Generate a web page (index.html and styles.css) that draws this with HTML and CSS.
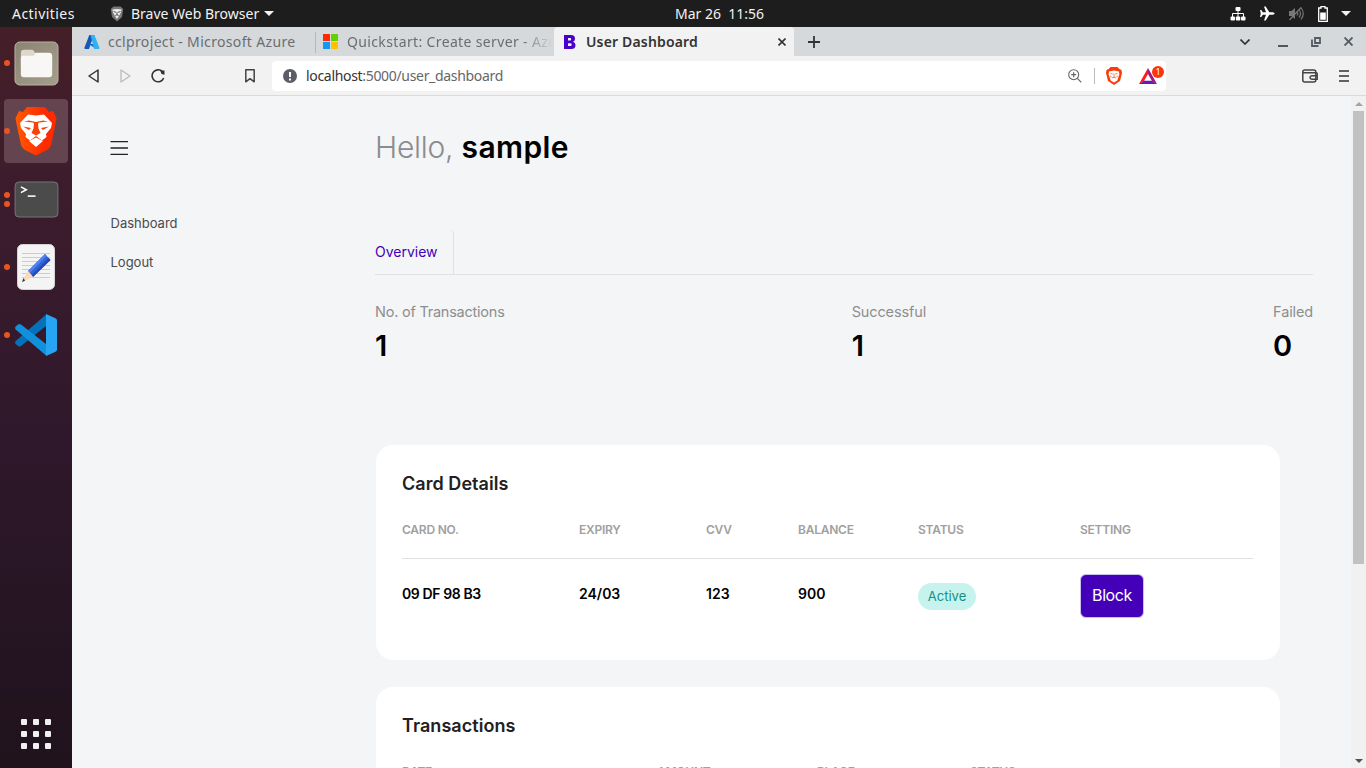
FILE: index.html
```html
<!DOCTYPE html>
<html lang="en">
<head>
<meta charset="utf-8">
<title>User Dashboard</title>
<link rel="stylesheet" href="styles.css">
</head>
<body>
<header class="topbar">
  <span class="activities">Activities</span>
  <div class="appmenu">
    <svg width="14" height="16" viewBox="0 0 14 16"><path d="M3.500.5h7L13.200 3 12 11 7 15.500 2 11 .8 3z" fill="#777"/><path d="M2.500 3.500 7 3l4.500.5-.6 3-2 3.500L7 13l-2-3-2-3.500z" fill="#eee"/><path d="M3.500 5.500l2.500.8M10.500 5.500 8 6.300M7 6v3M5.300 9.500 7 8.800l1.700.7" stroke="#555" fill="none"/></svg>
    <span class="appname">Brave Web Browser</span>
    <i class="caret"></i>
  </div>
  <span class="clock">Mar 26&nbsp; 11:56</span>
  <div class="tray">
    <svg width="16" height="14" viewBox="0 0 16 14" fill="#fff"><rect x="5.500" y="0" width="5" height="4" rx="1"/><rect x="0.500" y="9.500" width="4.500" height="4" rx="1"/><rect x="5.800" y="9.500" width="4.500" height="4" rx="1"/><rect x="11" y="9.500" width="4.500" height="4" rx="1"/><path d="M8 3v7M2.500 10V6.500h11V10" fill="none" stroke="#fff"/></svg>
    <svg width="15" height="15" viewBox="0 0 15 15" fill="#fff"><path d="M0 4h1.300l1.500 2.300H6L4 .5h1.700L9.300 6.300h3.200q2.200.3 2.200 1.200t-2.200 1.200H9.300L5.700 14.500H4l2-5.800H2.800L1.300 11H0l.8-3.500z"/></svg>
    <svg width="16" height="15" viewBox="0 0 16 15" fill="#777"><path d="M1 5h2.500L7 2v11l-3.500-3H1z"/><path d="M9 5.500q1.500 2 0 4M11 3.500q3 4 0 8M13 1.500q4.500 6 0 12M1.500 14 13 1.500" fill="none" stroke="#777" stroke-width="1.200"/></svg>
    <svg width="10" height="16" viewBox="0 0 10 16"><path d="M3 .7h4V2h2.300v13.300H.7V2H3z" fill="none" stroke="#fff" stroke-width="1.300"/><path d="M2.200 6.500h5.600v7.300H2.200z" fill="#fff"/></svg>
    <i class="caret"></i>
  </div>
</header>
<div class="desktop">
  <nav class="dock">
    <div class="launcher"><i class="dots"><b></b></i>
      <svg width="45" height="45" viewBox="0 0 46 46"><defs><linearGradient id="fg" x2="1" y2="1"><stop stop-color="#8b8474"/><stop offset="1" stop-color="#a59e8b"/></linearGradient></defs><rect x="1" y="1" width="44" height="44" rx="5" fill="url(#fg)" stroke="#b9b3a3"/><path d="M7 12q0-3 3-3h8q1.500 0 2.500 1.500L22 13h14q3 0 3 3v10H7z" fill="#dcd7c8"/><path d="M7 17q0-2 2-2h11l2-3h14q3 0 3 3v19q0 3-3 3H10q-3 0-3-3z" fill="#f8f7f5"/></svg></div>
    <div class="launcher active"><i class="dots"><b></b></i>
      <svg width="42" height="50" viewBox="0 0 42 50"><defs><linearGradient id="bg"><stop stop-color="#ff5a00"/><stop offset=".7" stop-color="#ff2a00"/></linearGradient></defs><path d="M12 1h18l4 5 4-1 3.500 7-1 6L36 39q-1 3-4 5L21 49.500 10 44q-3-2-4-5L1.500 18l-1-6L4 5l4 1z" fill="url(#bg)"/><path d="M13 8.500l8 1 8-1 8 8.500-1 5-5 6 .5 3-4.500 3.500-6-4.500-6 4.500-4.500-3.500.5-3-5-6-1-5z" fill="#fff"/><path d="M9 15.500l9 1 1 1-.5 5L16.500 27l4.500 2.500 4.500-2.500-2-4.500-.5-5 1-1 9-1-5-1-7 1.500-7-1.500zM8 20.500l8 1.500-2 2zM34 20.500 26 22l2 2z" fill="#f84208"/><path d="M21 31.500l7 3.500-7 6-7-6z" fill="#fff"/></svg></div>
    <div class="launcher"><i class="dots"><b></b><b></b></i>
      <svg width="45" height="37" viewBox="0 0 46 38"><rect x="1" y="1" width="44" height="36" rx="4" fill="#4b4b4b" stroke="#777"/><path d="M7 6l5.500 3L7 12" fill="none" stroke="#fff" stroke-width="1.600"/><path d="M14 15.500h8" stroke="#fff" stroke-width="1.600"/></svg></div>
    <div class="launcher"><i class="dots"><b></b></i>
      <svg width="38" height="46" viewBox="0 0 38 46"><rect x=".5" y=".5" width="37" height="45" rx="5" fill="#f4f4f4" stroke="#d4d4d4"/><path d="M5 9.500h28M5 13.500h28M5 17.500h28M5 21.500h28M5 25.500h28M5 29.500h28M5 33.500h28" stroke="#ccc"/><path d="M11 27 28 10l5.500 6L16 33z" fill="#2f63dc"/><path d="M11 27 28 10l1.800 2L12.800 29z" fill="#5580e8"/><path d="M14.500 31.500 31.700 14l1.800 2L16 33z" fill="#2149b8"/><path d="M11 27l5 6-11 5z" fill="#fbd9b9"/><path d="M6.500 34 8 36.800 5 38z" fill="#333"/></svg></div>
    <div class="launcher"><i class="dots"><b></b></i>
      <svg width="42" height="42" viewBox="0 0 42 42"><path d="M31 .5 31 12 6 32q-1.500 1-3 0L.7 30q-1.400-1.500 0-3z" fill="#0471b8"/><path d="M31 41.500V30L6 10.500q-1.500-1-3 0L.7 12.500q-1.400 1.500 0 3z" fill="#1190dc"/><path d="M31 0l9.500 4.200Q42 5 42 6.500v29q0 1.500-1.500 2.300L31 42z" fill="#27a5f2"/></svg></div>
    <div class="spacer"></div>
    <svg class="apps" width="30" height="30" viewBox="0 0 30 30" fill="#f2f0ee"><rect width="6" height="6" rx="1"/><rect x="12" width="6" height="6" rx="1"/><rect x="24" width="6" height="6" rx="1"/><rect y="12" width="6" height="6" rx="1"/><rect x="12" y="12" width="6" height="6" rx="1"/><rect x="24" y="12" width="6" height="6" rx="1"/><rect y="24" width="6" height="6" rx="1"/><rect x="12" y="24" width="6" height="6" rx="1"/><rect x="24" y="24" width="6" height="6" rx="1"/></svg>
  </nav>
  <div class="browser">
    <div class="tabs">
      <div class="tab azure"><svg width="16" height="14" viewBox="0 0 16 14"><path d="M5.300 0h4.500L5 14H1.400Q0 14 .5 12.500z" fill="#1557b5"/><path d="M4.500 9h7l1 5z" fill="#0a6fd0"/><path d="M6.500 0h4l4.900 12.800q.3 1.200-1 1.200h-4.200z" fill="#33b1ef"/></svg><span class="tabname">cclproject - Microsoft Azure</span></div>
      <div class="tab quick"><svg width="15" height="15" viewBox="0 0 15 15"><path d="M0 0h7v7H0z" fill="#ff2a00"/><path d="M8 0h7v7H8z" fill="#65cf00"/><path d="M0 8h7v7H0z" fill="#1298f5"/><path d="M8 8h7v7H8z" fill="#ffc200"/></svg><span class="tabname fade">Quickstart: Create server - Azu</span></div>
      <div class="tab current"><svg width="12" height="14" viewBox="0 0 12 14"><path fill-rule="evenodd" d="M0 0h7q4 0 4 3.700Q11 6 9 6.700q2.500.7 2.500 3.300Q11.500 14 7.500 14H0zM4 3v2.500h2q1.200 0 1.200-1.200T6 3zM4 8.300v2.800h2.300q1.400 0 1.400-1.400T6.300 8.300z" fill="#4a00cc"/></svg><span class="tabname">User Dashboard</span><svg class="tabclose" width="8" height="8" viewBox="0 0 8 8"><path d="M.5.5l7 7M7.500.5l-7 7" stroke="#333" stroke-width="1.600"/></svg></div>
      <svg class="newtab" width="12" height="12" viewBox="0 0 12 12"><path d="M6 0v12M0 6h12" stroke="#333" stroke-width="1.800"/></svg>
      <div class="wincontrols">
        <svg class="chevron" width="10" height="6" viewBox="0 0 10 6"><path d="M.5.500 5 5 9.500.5" fill="none" stroke="#333" stroke-width="1.700"/></svg>
        <svg width="10" height="10" viewBox="0 0 10 10"><path d="M0 9h10" stroke="#555" stroke-width="2"/></svg>
        <svg width="10" height="10" viewBox="0 0 10 10"><path d="M4 1h5v5H4zM1 2.500V9h6.500" fill="none" stroke="#555b63" stroke-width="1.800"/></svg>
        <svg width="9" height="9" viewBox="0 0 9 9"><path d="M.5.500l8 8M8.500.500l-8 8" stroke="#555b63" stroke-width="1.900"/></svg>
      </div>
    </div>
    <div class="toolbar">
      <svg width="11" height="14" viewBox="0 0 11 14"><path d="M10 1v12L1 7z" fill="none" stroke="#333" stroke-width="1.500" stroke-linejoin="round"/></svg>
      <svg class="fwd" width="11" height="14" viewBox="0 0 11 14"><path d="M1 1v12l9-6z" fill="none" stroke="#bbb" stroke-width="1.300" stroke-linejoin="round"/></svg>
      <svg class="reload" width="15" height="14" viewBox="0 0 15 14"><path d="M11 2.200A6 6 0 1 0 12.700 9" fill="none" stroke="#333" stroke-width="1.600"/><path d="M9.200 1.500h4.300v4.300l-3-.8z" fill="#333"/></svg>
      <svg class="mark" width="10" height="14" viewBox="0 0 10 14"><path d="M.8.8h8.400v12L5 9.700.8 12.800z" fill="none" stroke="#444" stroke-width="1.500" stroke-linejoin="round"/></svg>
      <div class="address">
        <svg width="14" height="14" viewBox="0 0 14 14"><circle cx="7" cy="7" r="7" fill="#5b5e66"/><path d="M7 3v5M7 9.500v2" stroke="#fff" stroke-width="2"/></svg>
        <span class="url">localhost<span>:5000/user_dashboard</span></span>
        <svg width="14" height="14" viewBox="0 0 14 14"><circle cx="5.700" cy="5.700" r="5" fill="none" stroke="#666" stroke-width="1.100"/><path d="M9.300 9.300 13.300 13.300M3.200 5.700h5M5.700 3.200v5" stroke="#666" stroke-width="1.200"/></svg>
        <i class="divider"></i>
        <svg class="shield" width="16" height="18" viewBox="0 0 16 18"><path d="M4.500 0h7L13 1.700 15.500 3 16 6l-2 8-6 4-6-4L0 6l.5-3L3 1.700z" fill="#fb3c08"/><path d="M3 4.500l5-1 5 1 .3 3-2 6L8 15.500l-3.300-2-2-6z" fill="#fff"/><path d="M4.500 6.500l2.200.5M11.500 6.500l-2.200.5M8 6.500v3.800M5.800 11 8 10.200l2.200.8M4 9l1.500.7M12 9l-1.500.7" stroke="#f65a2d" stroke-width=".8" fill="none"/></svg>
        <div class="rewards"><svg width="18" height="16" viewBox="0 0 18 16"><path d="M9 0 0 16l5-3 4-7z" fill="#ff1c14"/><path d="M9 0l9 16-5-3-4-7z" fill="#a0187e"/><path d="M0 16h18l-5-3.200H5z" fill="#6a1bb3"/></svg><span class="badge">1</span></div>
      </div>
      <svg class="wallet" width="16" height="14" viewBox="0 0 16 14"><rect x=".8" y="1" width="13" height="12" rx="2" fill="none" stroke="#444" stroke-width="1.500"/><path d="M1 3.700h13.300q.9 0 .9 1v5.500H10q-2-.2-2-1.700t2-1.700h5" fill="none" stroke="#444" stroke-width="1.500"/></svg>
      <svg class="burger" width="10" height="12" viewBox="0 0 10 12"><path d="M0 1h10M0 6h10M0 11h10" stroke="#333" stroke-width="1.700"/></svg>
    </div>
    <div class="viewport">
      <aside class="sidebar">
        <svg width="18" height="14" viewBox="0 0 18 14"><path d="M1 .5h16.500M1 7h16.500M1 13.500h16.500" stroke="#222" stroke-width="1.300" stroke-linecap="round"/></svg>
        <a class="side">Dashboard</a>
        <a class="side">Logout</a>
      </aside>
      <main class="main">
        <h1 class="hello"><span class="light">Hello,</span> <b>sample</b></h1>
        <div class="navtabs"><a class="overview">Overview</a></div>
        <section class="stats">
          <div><p class="long">No. of Transactions</p><strong>1</strong></div>
          <div><p>Successful</p><strong>1</strong></div>
          <div><p>Failed</p><strong>0</strong></div>
        </section>
        <section class="card details">
          <h2>Card Details</h2>
          <div class="row head"><span>CARD NO.</span><span>EXPIRY</span><span>CVV</span><span>BALANCE</span><span>STATUS</span><span>SETTING</span></div>
          <div class="row data"><span class="number">09 DF 98 B3</span><span>24/03</span><span>123</span><span>900</span><span><span class="pill">Active</span></span><span><button class="block">Block</button></span></div>
        </section>
        <section class="card">
          <h2>Transactions</h2>
          <div class="row head trans"><span>DATE</span><span>AMOUNT</span><span>PLACE</span><span>STATUS</span></div>
        </section>
      </main>
      <div class="scrollbar"><i class="up"></i><i class="thumb"></i><i class="down"></i></div>
    </div>
  </div>
</div>
</body>
</html>
```
FILE: styles.css
```css
* { box-sizing: border-box; }
body { margin: 0; width: 1366px; height: 768px; overflow: hidden; font-family: Inter, "Noto Sans", sans-serif; background: #f3f5f7; }
svg { display: block; flex: none; }
h1, h2, p { margin: 0; font-weight: inherit; }
.topbar { height: 27px; background: #1d1d1d; color: #f2f2f2; display: grid; grid-template-columns: 110px 565px 1fr auto; align-items: center; padding: 0 15px 0 0; font: 14px/27px "Noto Sans", sans-serif; }
.activities { padding-left: 12px; letter-spacing: .45px; }
.appmenu { display: flex; align-items: center; }
.appname { margin: 0 5px 0 7px; }
.caret { border: 5px solid transparent; border-top-color: #f2f2f2; border-bottom: 0; }
.tray { display: flex; align-items: center; gap: 13.4px; }
.desktop { display: flex; height: 741px; }
.dock { width: 72px; flex: none; display: flex; flex-direction: column; align-items: center; padding: 4px 0 19px; gap: 4px; background: linear-gradient(#451f28, #3b1c2d 25%, #2f182b 55%, #241422 85%, #20131c); }
.launcher { width: 64px; height: 64px; border-radius: 4px; display: grid; place-items: center; position: relative; }
.launcher.active { background: #64454f; }
.dots { position: absolute; left: 0; top: 0; height: 100%; display: flex; flex-direction: column; justify-content: center; gap: 3px; }
.dots b { width: 6px; height: 6px; border-radius: 50%; background: #e95420; }
.spacer { flex: 1; }
.browser { flex: 1; display: flex; flex-direction: column; min-width: 0; }
.tabs { height: 29px; background: #d5d9dc; display: flex; align-items: center; font: 14px/29px "Noto Sans", sans-serif; color: #6a6d70; white-space: nowrap; padding-right: 13px; }
.tab { display: flex; align-items: center; height: 29px; }
.tabname { letter-spacing: .34px; }
.azure { width: 244px; padding-left: 12px; gap: 8px; background: linear-gradient(#b4b8bb, #b4b8bb) right 60% / 1px 21px no-repeat; }
.quick { width: 238px; padding-left: 7px; gap: 9px; }
.tabname.fade { letter-spacing: .36px; width: 206px; -webkit-mask-image: linear-gradient(90deg, #000 84%, transparent); mask-image: linear-gradient(90deg, #000 84%, transparent); }
.current { width: 240px; background: #f2f2f2; border-radius: 4px 4px 0 0; padding: 0 8px 0 10px; gap: 10px; color: #333; font-weight: 600; }
.current .tabname { letter-spacing: .16px; }
.tabclose { margin-left: auto; }
.newtab { margin-left: 14px; }
.wincontrols { margin-left: auto; display: flex; align-items: center; gap: 23px; }
.chevron { margin-right: 5px; }
.toolbar { height: 40px; background: #f2f2f2; border-bottom: 1px solid #d8dadb; display: flex; align-items: center; padding: 0 17px 0 16px; }
.fwd { margin-left: 21px; }
.reload { margin-left: 20px; }
.mark { margin-left: 79px; }
.address { margin-left: 17px; width: 894px; height: 30px; background: #fff; border-radius: 4px; display: flex; align-items: center; padding: 0 2px 0 11px; font: 14px/30px "Noto Sans", sans-serif; color: #333; }
.url { margin: 0 auto 0 9px; letter-spacing: -.32px; }
.url span { color: #666; }
.divider { width: 1px; height: 16px; background: #bbb; margin: 0 11px 0 12px; }
.rewards { position: relative; width: 25px; margin-left: 17px; }
.badge { position: absolute; left: 13px; top: -2px; width: 12px; height: 12px; border-radius: 6px; background: #fb3510; color: #fff; font: 9px/12px "Noto Sans", sans-serif; text-align: center; }
.wallet { margin-left: auto; }
.burger { margin-left: 21px; }
.viewport { height: 672px; display: flex; overflow: hidden; background: #f3f5f7; }
.sidebar { width: 303px; flex: none; padding: 45px 0 0 38px; display: flex; flex-direction: column; align-items: flex-start; }
.side { font-size: 13px; line-height: 20px; color: #4a4a4a; margin: 0 0 19px .5px; }
.sidebar svg { margin-bottom: 58px; }
.main { width: 938px; padding-top: 31px; }
.hello { font-size: 30px; line-height: 40px; color: #000; white-space: nowrap; }
.hello .light { font-weight: 300; color: #8c8c8c; letter-spacing: -.3px; }
.hello b { font-weight: 600; letter-spacing: .4px; }
.navtabs { margin-top: 63px; height: 45px; border-bottom: 1px solid #dee2e6; }
.overview { display: block; width: 79px; height: 44px; border-right: 1px solid #dee2e6; border-top-right-radius: 4px; color: #4400b8; font-size: 14px; line-height: 44px; }
.stats { display: flex; justify-content: space-between; margin-top: 26px; color: #8e8e8e; font-size: 14.500px; line-height: 21px; letter-spacing: -.13px; }
.long { letter-spacing: -.23px; }
.stats strong { display: block; color: #000; font-size: 29px; font-weight: 600; line-height: 44px; margin-top: 2px; }
.card { width: 904px; height: 215px; margin: 0 0 27px 1px; background: #fff; border-radius: 17px; padding: 25px 27px 0 26px; }
.details { margin-top: 77px; }
.card h2 { color: #212121; font-size: 18px; font-weight: 600; line-height: 27px; letter-spacing: .05px; }
.row { display: grid; grid-template-columns: 177px 127px 92px 120px 162px 1fr; }
.head { height: 62px; padding-top: 22px; font-size: 12px; line-height: 22px; color: #a0a0a0; font-weight: 600; letter-spacing: -.23px; border-bottom: 1px solid #dee0e4; }
.data { padding-top: 15px; font-size: 14px; line-height: 40px; font-weight: 600; color: #000; }
.number { letter-spacing: -.4px; }
.pill { display: block; width: 58px; height: 27px; margin-top: 9px; border-radius: 14px; background: #c6f3ee; color: #159087; font-size: 13px; font-weight: 400; line-height: 27px; text-align: center; }
.block { display: block; width: 64px; height: 44px; border: 1px solid #c9c0f2; border-radius: 6px; background: #4400b8; color: #fff; font: 16px/40px Inter, sans-serif; letter-spacing: -.4px; padding: 0 0 2px; text-align: center; }
.trans { grid-template-columns: 255px 160px 153px 1fr; }
.scrollbar { width: 15px; margin-left: auto; background: #f1f1f1; display: flex; flex-direction: column; align-items: center; padding: 6px 0 5px; }
.up, .down { border: 4px solid transparent; }
.up { border-top: 0; border-bottom-color: #a3a3a3; }
.down { border-bottom: 0; border-top-color: #505050; margin-top: auto; }
.thumb { width: 11px; height: 453px; margin-top: 5px; background: #c1c1c1; }
```
